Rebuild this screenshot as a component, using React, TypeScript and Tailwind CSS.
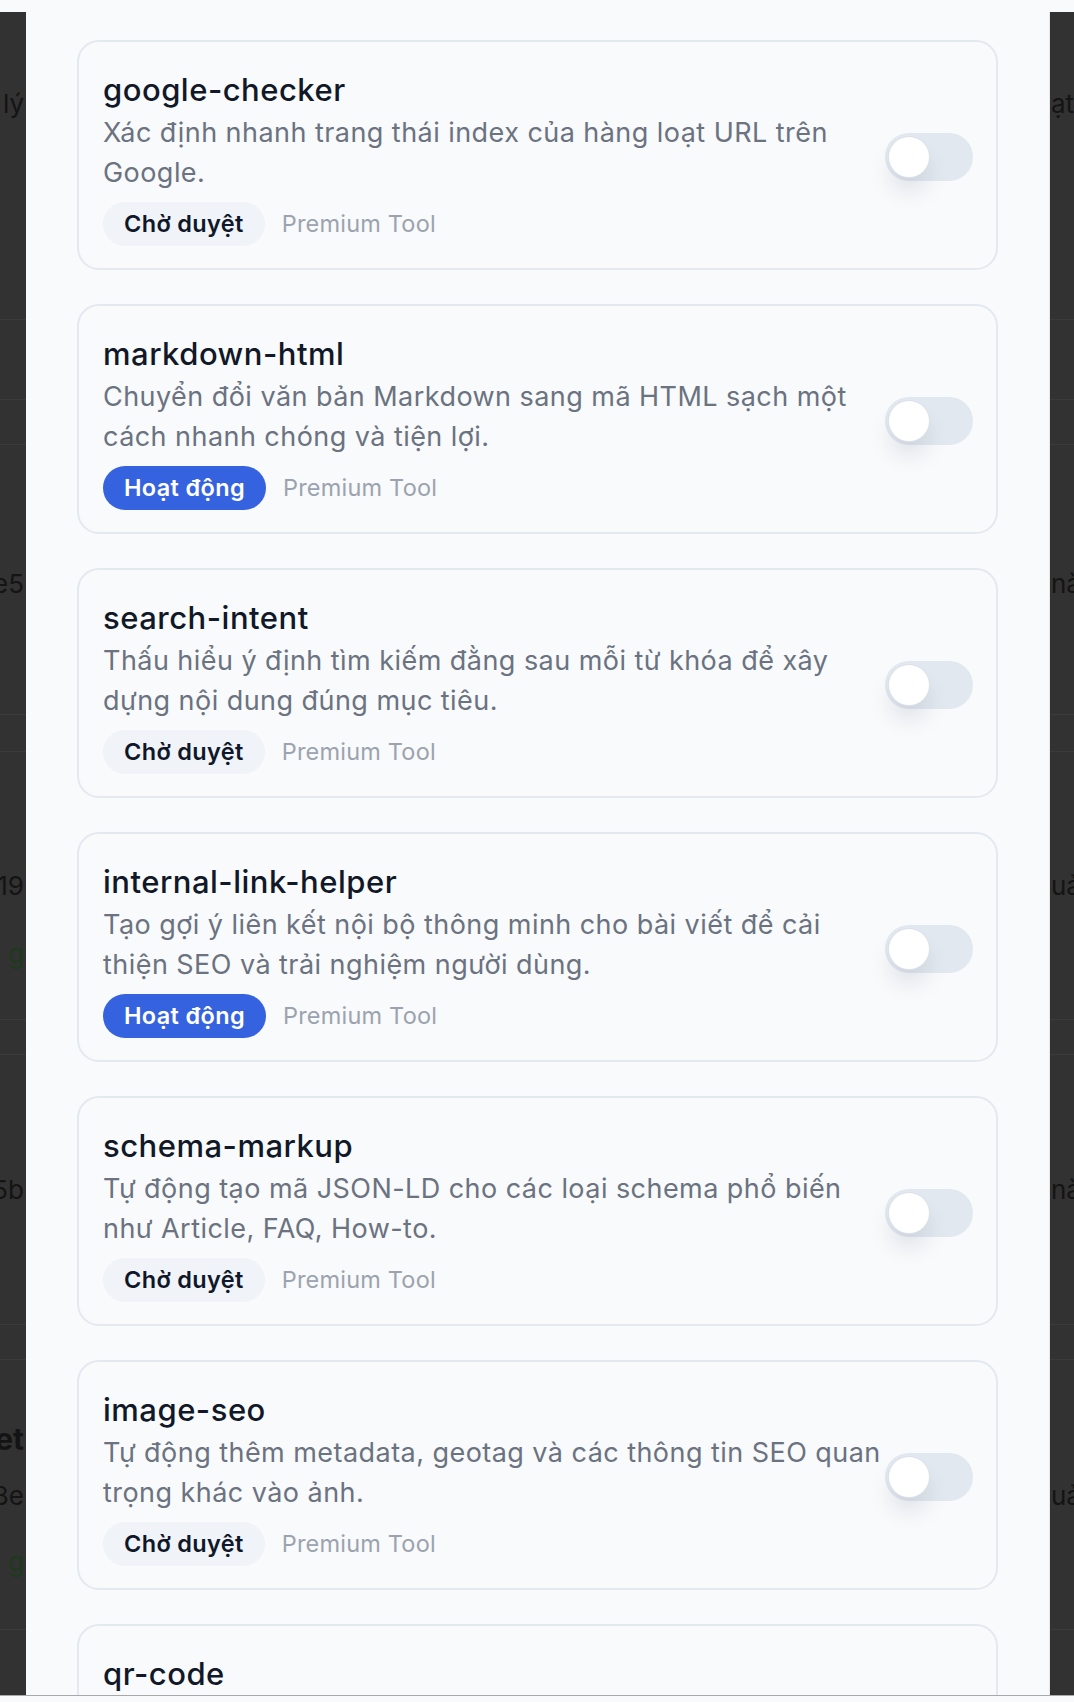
import React from "react";

type Tool = {
  name: string;
  desc: string;
  active: boolean;
};

const TOOLS: Tool[] = [
  {
    name: "google-checker",
    desc: "Xác định nhanh trang thái index của hàng loạt URL trên Google.",
    active: false,
  },
  {
    name: "markdown-html",
    desc: "Chuyển đổi văn bản Markdown sang mã HTML sạch một cách nhanh chóng và tiện lợi.",
    active: true,
  },
  {
    name: "search-intent",
    desc: "Thấu hiểu ý định tìm kiếm đằng sau mỗi từ khóa để xây dựng nội dung đúng mục tiêu.",
    active: false,
  },
  {
    name: "internal-link-helper",
    desc: "Tạo gợi ý liên kết nội bộ thông minh cho bài viết để cải thiện SEO và trải nghiệm người dùng.",
    active: true,
  },
  {
    name: "schema-markup",
    desc: "Tự động tạo mã JSON-LD cho các loại schema phổ biến như Article, FAQ, How-to.",
    active: false,
  },
  {
    name: "image-seo",
    desc: "Tự động thêm metadata, geotag và các thông tin SEO quan trọng khác vào ảnh.",
    active: false,
  },
  {
    name: "qr-code",
    desc: "Tạo mã QR nhanh chóng cho đường dẫn, văn bản và thông tin liên hệ.",
    active: false,
  },
];

type BgRow = {
  h: number;
  left?: string;
  right?: string;
  line?: boolean;
  green?: boolean;
  bold?: boolean;
};

// faint rows of the page behind the overlay
const BG_ROWS: BgRow[] = [
  { h: 60 },
  { h: 62, left: "lý", right: "ạt" },
  { h: 186, line: true },
  { h: 80, line: true },
  { h: 45, line: true },
  { h: 108 },
  { h: 60, left: "e5", right: "nà" },
  { h: 102, line: true },
  { h: 37, line: true },
  { h: 107 },
  { h: 52, left: "19", right: "uả" },
  { h: 84, left: "g", green: true },
  { h: 25, line: true },
  { h: 35, line: true },
  { h: 104 },
  { h: 60, left: "5b", right: "nà" },
  { h: 106, line: true },
  { h: 35, line: true },
  { h: 49 },
  { h: 60, left: "et", bold: true },
  { h: 52, left: "8e", right: "uả" },
  { h: 80, left: "g", green: true },
  { h: 29, line: true },
];

function BgStrip({ side }: { side: "left" | "right" }) {
  return (
    <div className="flex h-full flex-col overflow-hidden bg-[#323232]">
      {BG_ROWS.map((row, i) => {
        const text = side === "left" ? row.left : row.right;
        return (
          <div
            key={i}
            style={{ height: row.h }}
            className={`flex shrink-0 items-center whitespace-nowrap ${
              side === "left" ? "justify-end pr-[2px]" : "justify-start pl-[1px]"
            } ${row.line ? "border-b border-[#3b3b3b]" : ""} ${
              row.green ? "text-[#1d3a1d]" : "text-[#141414]"
            } ${row.bold ? "text-[30px] font-bold" : "text-[26px]"}`}
          >
            {text}
          </div>
        );
      })}
      <div className="flex-1" />
    </div>
  );
}

function Toggle() {
  return (
    <div className="flex h-[48px] w-[88px] shrink-0 items-center rounded-full bg-[#e2e8f0] px-[4px]">
      <div className="h-[40px] w-[40px] rounded-full bg-white shadow-[0_16px_26px_-4px_rgba(15,23,42,0.14)] ring-1 ring-[#dbe1e8]" />
    </div>
  );
}

function ToolCard({ tool }: { tool: Tool }) {
  return (
    <div className="flex shrink-0 items-center rounded-[22px] border-2 border-[#e4e9f0] bg-[#f8fafc] pb-[22px] pl-[24px] pr-[23px] pt-[25px]">
      <div className="min-w-0 flex-1">
        <h3 className="text-[31px] font-medium leading-[46px] tracking-[0.5px] text-[#111827]">
          {tool.name}
        </h3>
        <p className="text-[27px] leading-[40px] tracking-[0.45px] text-[#6b7280]">
          {tool.desc}
        </p>
        <div className="mt-[9px] flex items-center gap-[17px]">
          <span
            className={`flex h-[44px] items-center rounded-full px-[21px] text-[23.5px] font-semibold tracking-[0.35px] ${
              tool.active
                ? "bg-[#3563e0] text-white"
                : "bg-[#f0f3f7] text-[#0f172a]"
            }`}
          >
            {tool.active ? "Hoạt động" : "Chờ duyệt"}
          </span>
          <span className="text-[23.5px] tracking-[0.2px] text-[#9ca3af]">
            Premium Tool
          </span>
        </div>
      </div>
      <Toggle />
    </div>
  );
}

export default function App() {
  return (
    <div
      className="flex h-[1702px] w-[1074px] flex-col overflow-hidden bg-[#f8fafc]"
      style={{ fontFamily: "Inter, 'Noto Sans', sans-serif" }}
    >
      <div className="h-[12px] shrink-0 bg-[#f8fafc]" />
      <div className="flex min-h-0 flex-1 overflow-hidden">
        <div className="w-[26px] shrink-0">
          <BgStrip side="left" />
        </div>
        <div className="flex w-[1024px] shrink-0 flex-col gap-[34px] overflow-hidden border-r border-[#e5e7eb] bg-[#f8fafc] px-[51px] pt-[28px]">
          {TOOLS.map((tool) => (
            <ToolCard key={tool.name} tool={tool} />
          ))}
        </div>
        <div className="min-w-0 flex-1">
          <BgStrip side="right" />
        </div>
      </div>
      <div className="h-[7px] shrink-0 border-t border-[#a8a8a8] bg-[#f8fafc]" />
    </div>
  );
}
